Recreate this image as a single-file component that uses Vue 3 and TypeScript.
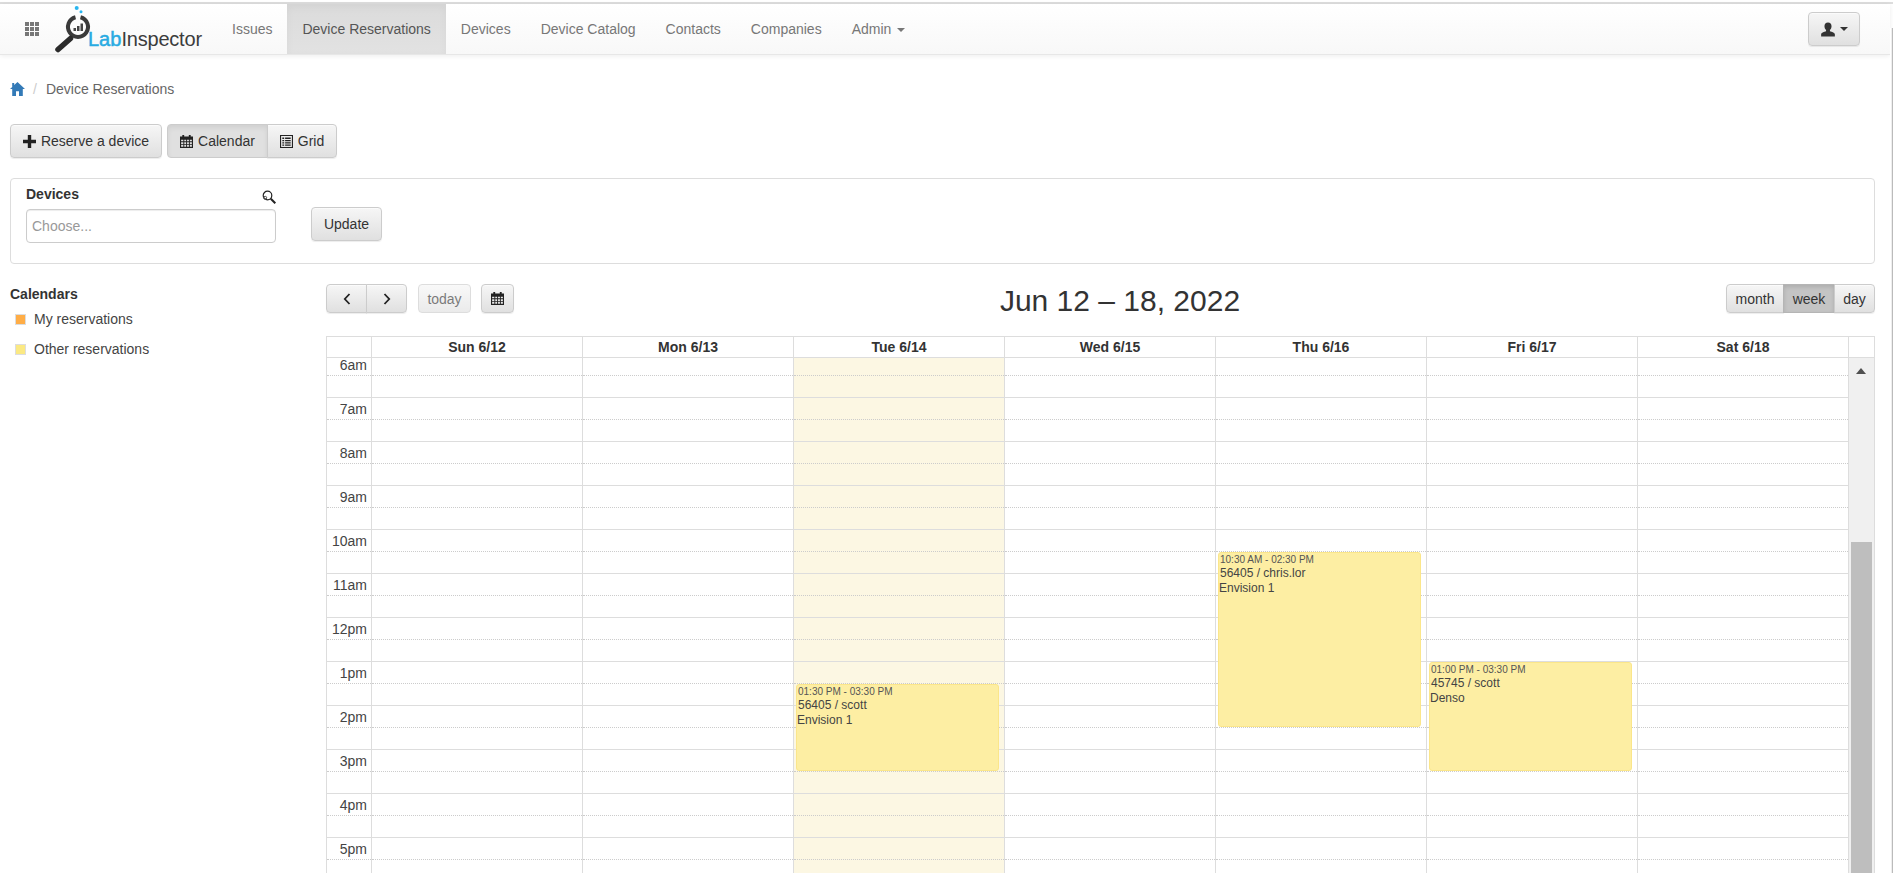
<script setup lang="ts">
interface CalEvent {
  start: number;
  end: number;
  time: string;
  title: string;
  device: string;
}

interface Day {
  label: string;
  today?: boolean;
  events: CalEvent[];
}

const HOUR_PX = 44;
const FIRST_HOUR = 6;

const navItems = ['Issues', 'Device Reservations', 'Devices', 'Device Catalog', 'Contacts', 'Companies'];
const hours = ['6am', '7am', '8am', '9am', '10am', '11am', '12pm', '1pm', '2pm', '3pm', '4pm', '5pm'];

const days: Day[] = [
  { label: 'Sun 6/12', events: [] },
  { label: 'Mon 6/13', events: [] },
  {
    label: 'Tue 6/14',
    today: true,
    events: [{ start: 13.5, end: 15.5, time: '01:30 PM - 03:30 PM', title: '56405 / scott', device: 'Envision 1' }]
  },
  { label: 'Wed 6/15', events: [] },
  {
    label: 'Thu 6/16',
    events: [{ start: 10.5, end: 14.5, time: '10:30 AM - 02:30 PM', title: '56405 / chris.lor', device: 'Envision 1' }]
  },
  {
    label: 'Fri 6/17',
    events: [{ start: 13, end: 15.5, time: '01:00 PM - 03:30 PM', title: '45745 / scott', device: 'Denso' }]
  },
  { label: 'Sat 6/18', events: [] }
];

function eventStyle(ev: CalEvent) {
  return {
    top: `${(ev.start - FIRST_HOUR) * HOUR_PX}px`,
    height: `${(ev.end - ev.start) * HOUR_PX - 1}px`
  };
}
</script>

<template>
  <div class="app">
    <div class="top-rule"></div>
    <div class="shell">
      <div class="page">
        <nav class="navbar">
          <svg class="apps-icon" viewBox="0 0 14 14" width="14" height="14">
            <g fill="#777">
              <rect x="0" y="0" width="4" height="4" /><rect x="5" y="0" width="4" height="4" /><rect x="10" y="0" width="4" height="4" />
              <rect x="0" y="5" width="4" height="4" /><rect x="5" y="5" width="4" height="4" /><rect x="10" y="5" width="4" height="4" />
              <rect x="0" y="10" width="4" height="4" /><rect x="5" y="10" width="4" height="4" /><rect x="10" y="10" width="4" height="4" />
            </g>
          </svg>
          <svg class="logo" viewBox="0 0 150 50" width="150" height="50">
            <circle cx="21.7" cy="4" r="2" fill="#29b6f0" />
            <circle cx="26" cy="7.7" r="1.5" fill="#29b6f0" />
            <path d="M25.5 13.200a10 10 0 1 1-5 0" fill="none" stroke="#3a3a3a" stroke-width="4" />
            <path d="M3 45.500 15.500 34.500" stroke="#2b2b2b" stroke-width="5.500" stroke-linecap="round" />
            <g fill="#444">
              <rect x="18.500" y="24" width="2.500" height="3" /><rect x="22" y="22" width="2.500" height="5" /><rect x="25.500" y="19.500" width="2.500" height="7.500" />
            </g>
            <text x="33" y="41.700" class="logo-text"><tspan class="logo-lab">Lab</tspan><tspan class="logo-rest">Inspector</tspan></text>
          </svg>
          <ul class="nav-list">
            <li v-for="item in navItems" :key="item" class="nav-link" :class="{ active: item === 'Device Reservations' }">{{ item }}</li>
            <li class="nav-link">Admin <span class="caret"></span></li>
          </ul>
          <button class="btn user-btn">
            <svg viewBox="0 0 14 14" width="16" height="15" preserveAspectRatio="none">
              <path d="M7 .5c2 0 3.100 1.500 3.100 3.500 0 1.400-.6 2.800-1.400 3.500v1.200c1.700.7 4.300 1.200 4.300 2.800V13.500H1v-2c0-1.600 2.600-2.100 4.300-2.800V7.500C4.500 6.800 3.900 5.400 3.900 4 3.900 2 5 .5 7 .5Z" fill="#333" />
            </svg>
            <span class="caret dark"></span>
          </button>
        </nav>

        <main class="content">
          <div class="breadcrumb">
            <svg viewBox="0 0 15 14" width="15" height="14">
              <path d="M7.500 0 15 7h-2.200v7H9V9.200H6V14H2.200V7H0L2.200 4.900V1h2v2Z" fill="#337ab7" />
            </svg>
            <span class="crumb-sep">/</span>
            <span class="crumb-text">Device Reservations</span>
          </div>

          <div class="actions">
            <button class="btn btn-reserve">
              <svg viewBox="0 0 13 13" width="13" height="13"><path d="M4.800 0h3.400v4.800H13v3.400H8.200V13H4.800V8.200H0V4.800h4.800Z" fill="#222" /></svg>
              Reserve a device
            </button>
            <div class="btn-group">
              <button class="btn active btn-calendar">
                <svg viewBox="0 0 14 14" width="13" height="13">
                  <path fill-rule="evenodd" d="M2.500 0h2v1.500h5V0h2v1.500H14V14H0V1.500h2.500ZM1.200 5v1.800h2.400V5Zm3.400 0v1.800h2V5Zm3 0v1.800h2V5Zm3 0v1.800h2.200V5ZM1.200 7.800v1.800h2.400V7.800Zm3.400 0v1.800h2V7.800Zm3 0v1.800h2V7.800Zm3 0v1.800h2.200V7.800ZM1.200 10.600v2h2.400v-2Zm3.400 0v2h2v-2Zm3 0v2h2v-2Zm3 0v2h2.200v-2Z" fill="#222" />
                </svg>
                Calendar
              </button>
              <button class="btn btn-grid">
                <svg viewBox="0 0 14 14" width="13" height="13">
                  <path fill-rule="evenodd" d="M0 0h14v14H0Zm1.200 1.200v11.600h11.600V1.200ZM2.500 2.800h2v1.400h-2Zm3 0h6v1.400h-6Zm-3 2.500h2v1.400h-2Zm3 0h6v1.400h-6Zm-3 2.500h2v1.400h-2Zm3 0h6v1.400h-6Zm-3 2.500h2v1.400h-2Zm3 0h6v1.400h-6Z" fill="#222" />
                </svg>
                Grid
              </button>
            </div>
          </div>

          <section class="filter-panel">
            <div class="field">
              <div class="field-head">
                <label class="field-label">Devices</label>
                <svg viewBox="0 0 14 14" width="14" height="14">
                  <circle cx="5.500" cy="5.500" r="4.300" fill="none" stroke="#222" stroke-width="1.200" />
                  <circle cx="3.200" cy="7.800" r="1.500" fill="none" stroke="#555" stroke-width="1" />
                  <path d="M8.800 8.800 13.300 13.300" stroke="#222" stroke-width="2" />
                </svg>
              </div>
              <input class="field-input" type="text" placeholder="Choose..." />
            </div>
            <button class="btn btn-update">Update</button>
          </section>

          <div class="main-row">
            <aside class="sidebar">
              <h4 class="side-title">Calendars</h4>
              <div class="legend-row"><span class="swatch mine"></span>My reservations</div>
              <div class="legend-row"><span class="swatch other"></span>Other reservations</div>
            </aside>

            <div class="calendar">
              <div class="cal-toolbar">
                <div class="tool-left">
                  <div class="btn-group">
                    <button class="btn btn-sm btn-arrow">
                      <svg viewBox="0 0 10 14" width="10" height="14"><path d="M7.500 2 2.800 7l4.700 5" fill="none" stroke="#222" stroke-width="1.800" /></svg>
                    </button>
                    <button class="btn btn-sm btn-arrow">
                      <svg viewBox="0 0 10 14" width="10" height="14"><path d="M2.500 2 7.200 7l-4.700 5" fill="none" stroke="#222" stroke-width="1.800" /></svg>
                    </button>
                  </div>
                  <button class="btn btn-sm btn-today" disabled>today</button>
                  <button class="btn btn-sm btn-pick">
                    <svg viewBox="0 0 14 14" width="13" height="13">
                      <path fill-rule="evenodd" d="M2.500 0h2v1.500h5V0h2v1.500H14V14H0V1.500h2.500ZM1.200 5v1.800h2.400V5Zm3.400 0v1.800h2V5Zm3 0v1.800h2V5Zm3 0v1.800h2.200V5ZM1.200 7.800v1.800h2.400V7.800Zm3.400 0v1.800h2V7.800Zm3 0v1.800h2V7.800Zm3 0v1.800h2.200V7.800ZM1.200 10.600v2h2.400v-2Zm3.400 0v2h2v-2Zm3 0v2h2v-2Zm3 0v2h2.200v-2Z" fill="#222" />
                    </svg>
                  </button>
                </div>
                <h2 class="cal-title">Jun 12 – 18, 2022</h2>
                <div class="btn-group">
                  <button class="btn btn-sm btn-month">month</button>
                  <button class="btn btn-sm btn-week">week</button>
                  <button class="btn btn-sm btn-day">day</button>
                </div>
              </div>

              <div class="cal-grid">
                <div class="cal-head">
                  <div class="head-axis"></div>
                  <div v-for="day in days" :key="day.label" class="head-cell">{{ day.label }}</div>
                  <div class="head-scroll"></div>
                </div>
                <div class="cal-body">
                  <div class="cal-rows">
                    <div class="axis-col">
                      <template v-for="h in hours" :key="h">
                        <div class="slot axis-label">{{ h }}</div>
                        <div class="slot hour-end"></div>
                      </template>
                    </div>
                    <div v-for="day in days" :key="day.label" class="day-col" :class="{ today: day.today }">
                      <template v-for="h in hours" :key="h">
                        <div class="slot"></div>
                        <div class="slot hour-end"></div>
                      </template>
                      <div v-for="ev in day.events" :key="ev.time" class="event" :style="eventStyle(ev)">
                        <div class="ev-time">{{ ev.time }}</div>
                        <div class="ev-title">{{ ev.title }}</div>
                        <div class="ev-device">{{ ev.device }}</div>
                      </div>
                    </div>
                  </div>
                  <div class="scroll-track">
                    <span class="scroll-arrow"></span>
                    <div class="scroll-thumb"></div>
                  </div>
                </div>
              </div>
            </div>
          </div>
        </main>
      </div>
      <div class="window-edge"></div>
    </div>
  </div>
</template>

<style>
html,
body {
  margin: 0;
  overflow: hidden;
  background: #fff;
}
</style>

<style scoped>
.app {
  height: 873px;
  overflow: hidden;
  font-family: 'Liberation Sans', Arial, sans-serif;
  font-size: 14px;
  line-height: 20px;
  color: #333;
}
.top-rule {
  height: 2px;
  margin-top: 2px;
  background: #ddd;
}
.shell {
  display: flex;
}
.page {
  width: 1890px;
  flex: none;
}
.window-edge {
  flex: none;
  width: 3px;
  height: 845px;
  margin-top: 24px;
  background: linear-gradient(90deg, #fff 0, #fff 1px, #eee 1px, #eee 2px, #bbb 2px);
}

/* navbar */
.navbar {
  display: flex;
  align-items: center;
  height: 50px;
  border-bottom: 1px solid #e7e7e7;
  background: linear-gradient(#fff, #f8f8f8);
  box-shadow: 0 1px 5px rgba(0, 0, 0, 0.075);
}
.apps-icon {
  flex: none;
  margin-left: 25px;
}
.logo {
  flex: none;
  margin-left: 16px;
  margin-right: 12px;
}
.logo-text {
  font-family: 'Liberation Sans', Arial, sans-serif;
  font-size: 20px;
}
.logo-lab {
  fill: #29abe2;
  stroke: #29abe2;
  stroke-width: 0.5px;
}
.logo-rest {
  fill: #3c3c3c;
  letter-spacing: -0.2px;
}
.nav-list {
  display: flex;
  margin: 0;
  padding: 0;
  list-style: none;
}
.nav-link {
  padding: 0 15px;
  line-height: 50px;
  color: #777;
}
.nav-link.active {
  color: #555;
  background: linear-gradient(#dbdbdb, #e2e2e2);
  box-shadow: inset 0 3px 9px rgba(0, 0, 0, 0.04);
}
.caret {
  display: inline-block;
  width: 0;
  height: 0;
  margin-left: 2px;
  vertical-align: middle;
  border-top: 4px solid #777;
  border-left: 4px solid transparent;
  border-right: 4px solid transparent;
}
.caret.dark {
  border-top-color: #333;
}

/* buttons */
.btn {
  box-sizing: border-box;
  display: inline-flex;
  align-items: center;
  justify-content: center;
  height: 34px;
  padding: 0 12px;
  font: inherit;
  color: #333;
  white-space: nowrap;
  border: 1px solid #ccc;
  border-radius: 4px;
  background: linear-gradient(#f6f6f6, #e0e0e0);
  box-shadow: inset 0 1px 0 rgba(255, 255, 255, 0.5), 0 1px 1px rgba(0, 0, 0, 0.075);
}
.btn svg {
  flex: none;
}
.btn.active {
  background: #e0e0e0;
  box-shadow: inset 0 3px 5px rgba(0, 0, 0, 0.07);
}
.btn-sm {
  height: 29px;
  padding: 0;
}
.btn-group {
  display: flex;
}
.btn-group .btn:not(:first-child) {
  margin-left: -1px;
  border-top-left-radius: 0;
  border-bottom-left-radius: 0;
}
.btn-group .btn:not(:last-child) {
  border-top-right-radius: 0;
  border-bottom-right-radius: 0;
}
.user-btn {
  width: 52px;
  margin-left: auto;
  margin-right: 30px;
  gap: 2px;
}

/* breadcrumb + actions */
.content {
  padding: 0 15px 0 10px;
}
.breadcrumb {
  display: flex;
  align-items: center;
  height: 20px;
  margin-top: 24px;
  color: #666;
}
.crumb-sep {
  margin-left: 8px;
  color: #ccc;
}
.crumb-text {
  margin-left: 9px;
}
.actions {
  display: flex;
  gap: 5px;
  margin-top: 25px;
}
.btn-reserve {
  width: 152px;
  padding: 0;
  gap: 5px;
}
.btn-calendar {
  width: 101px;
  padding: 0;
  gap: 5px;
}
.btn-grid {
  width: 70px;
  padding: 0;
  gap: 5px;
}

/* device filter */
.filter-panel {
  box-sizing: border-box;
  display: flex;
  height: 86px;
  margin-top: 20px;
  padding: 5px 15px 0;
  border: 1px solid #ddd;
  border-radius: 4px;
}
.field {
  width: 250px;
}
.field-head {
  display: flex;
  align-items: center;
  justify-content: space-between;
  height: 20px;
  margin-bottom: 5px;
}
.field-label {
  font-weight: 700;
}
.field-head svg {
  margin-top: 6px;
}
.field-input {
  box-sizing: border-box;
  display: block;
  width: 100%;
  height: 34px;
  padding: 0 5px;
  font: inherit;
  color: #555;
  border: 1px solid #ccc;
  border-radius: 4px;
  box-shadow: inset 0 1px 1px rgba(0, 0, 0, 0.075);
  outline: none;
}
.field-input::placeholder {
  color: #999;
  opacity: 1;
}
.btn-update {
  width: 71px;
  padding: 0;
  margin-top: 23px;
  margin-left: 35px;
}

/* main layout */
.main-row {
  display: flex;
  margin-top: 20px;
}
.sidebar {
  flex: none;
  width: 316px;
}
.side-title {
  margin: 0 0 5px;
  font-size: 14px;
  font-weight: 700;
  line-height: 20px;
}
.legend-row {
  display: flex;
  align-items: center;
  height: 20px;
  margin-bottom: 10px;
  color: #444;
}
.swatch {
  box-sizing: border-box;
  width: 11px;
  height: 11px;
  margin-left: 5px;
  margin-right: 8px;
  border: 1px solid #ddd;
}
.swatch.mine {
  background: #ffad46;
}
.swatch.other {
  background: #fbe983;
}

/* calendar toolbar */
.calendar {
  flex: 1;
  min-width: 0;
}
.cal-toolbar {
  display: flex;
  align-items: flex-start;
  justify-content: space-between;
  height: 29px;
  margin-bottom: 23px;
}
.tool-left {
  display: flex;
}
.btn-arrow {
  width: 41px;
}
.btn-today {
  width: 53px;
  margin-left: 11px;
  opacity: 0.65;
  box-shadow: none;
}
.btn-pick {
  width: 33px;
  margin-left: 10px;
}
.cal-title {
  margin: 0;
  font-size: 30px;
  font-weight: 400;
  line-height: 33px;
  color: #333;
}
.btn-month {
  width: 58px;
}
.btn-week {
  width: 52px;
  background: #c4c4c4;
  border-color: #b5b5b5;
  box-shadow: inset 0 2px 4px rgba(0, 0, 0, 0.12);
}
.btn-day {
  width: 41px;
}

/* week grid */
.cal-grid {
  border-left: 1px solid #ddd;
  border-top: 1px solid #ddd;
}
.cal-head {
  display: flex;
  height: 20px;
  border-bottom: 1px solid #ddd;
}
.head-axis {
  box-sizing: border-box;
  flex: none;
  width: 45px;
  border-right: 1px solid #ddd;
}
.head-cell {
  box-sizing: border-box;
  flex: none;
  width: 211px;
  font-weight: 700;
  text-align: center;
  border-right: 1px solid #ddd;
}
.head-scroll {
  box-sizing: border-box;
  flex: none;
  width: 26px;
  border-right: 1px solid #ddd;
}
.cal-body {
  display: flex;
  height: 516px;
  overflow: hidden;
}
.cal-rows {
  display: flex;
  flex: none;
  margin-top: -4px;
}
.axis-col {
  box-sizing: border-box;
  width: 45px;
  border-right: 1px solid #ddd;
}
.day-col {
  box-sizing: border-box;
  position: relative;
  width: 211px;
  border-right: 1px solid #ddd;
}
.day-col.today {
  background: #fcf7e3;
}
.slot {
  box-sizing: border-box;
  height: 22px;
  border-bottom: 1px dotted #ccc;
}
.slot.hour-end {
  border-bottom: 1px solid #ddd;
}
.axis-label {
  padding: 4px 4px 0 0;
  line-height: 15px;
  text-align: right;
  color: #444;
}

/* events */
.event {
  box-sizing: border-box;
  position: absolute;
  left: 2px;
  width: 203px;
  padding: 1px 0 0;
  overflow: hidden;
  color: #444;
  background: #fdeea3;
  border: 1px solid #fbe68a;
  border-radius: 3px;
}
.ev-time {
  padding-left: 1px;
  font-size: 10px;
  line-height: 12px;
  color: #555;
}
.ev-title {
  padding-left: 1px;
  font-size: 12px;
  line-height: 15px;
}
.ev-device {
  font-size: 12px;
  line-height: 15px;
}

/* scrollbar */
.scroll-track {
  box-sizing: border-box;
  flex: none;
  width: 26px;
  padding-top: 10px;
  background: #f0f0f0;
  border-right: 1px solid #ddd;
}
.scroll-arrow {
  display: block;
  width: 0;
  height: 0;
  margin-left: 7px;
  border-bottom: 6px solid #505050;
  border-left: 5.5px solid transparent;
  border-right: 5.5px solid transparent;
}
.scroll-thumb {
  width: 21px;
  height: 340px;
  margin-top: 168px;
  margin-left: 2px;
  background: #bebebe;
}
</style>
